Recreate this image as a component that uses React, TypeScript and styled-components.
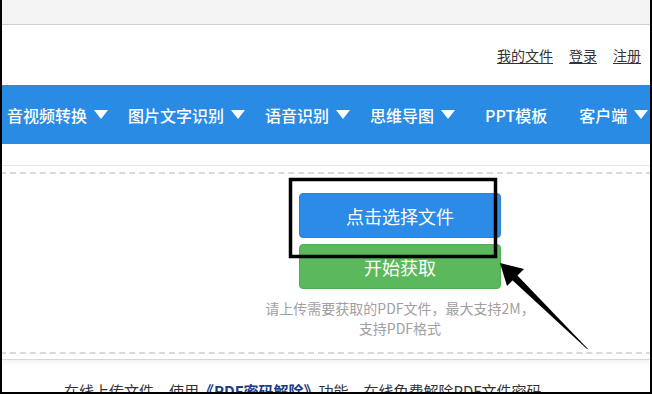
import React from "react";
import styled, { createGlobalStyle } from "styled-components";

const GlobalStyle = createGlobalStyle`
  html, body {
    margin: 0;
    padding: 0;
    background: #fff;
  }
  body {
    font-family: "Noto Sans CJK SC", "Noto Sans", sans-serif;
  }
`;

const Page = styled.div`
  position: relative;
  width: 652px;
  height: 394px;
  box-sizing: border-box;
  border: 2px solid #000;
  border-top: none;
  overflow: hidden;
  display: flex;
  flex-direction: column;
  background: #fff;
`;

const TopBar = styled.div`
  height: 24px;
  flex: none;
  background: #f4f4f4;
  border-bottom: 1px solid #cfcfcf;
`;

const Header = styled.div`
  height: 60px;
  flex: none;
  display: flex;
  align-items: center;
  justify-content: flex-end;
  gap: 16px;
  padding: 0 9px 0 0;
  box-sizing: border-box;
`;

const HeaderLink = styled.a`
  font-size: 14px;
  color: #333;
  text-decoration: underline;
  text-underline-offset: 2px;
  cursor: pointer;
`;

const Nav = styled.nav`
  height: 59px;
  flex: none;
  background: #2a8be4;
  display: flex;
  align-items: center;
  gap: 20px;
  padding-left: 5px;
  white-space: nowrap;
`;

const NavItem = styled.div<{ $plain?: boolean }>`
  display: flex;
  align-items: center;
  gap: 7px;
  color: #fff;
  font-size: 16px;
  font-weight: 500;
  flex: none;
  margin: ${(p) => (p.$plain ? "0 12px 0 10px" : "0")};
`;

const Caret = styled.span`
  width: 0;
  height: 0;
  border-left: 7.5px solid transparent;
  border-right: 7.5px solid transparent;
  border-top: 9px solid #fff;
`;

const Gap = styled.div`
  height: 21px;
  flex: none;
`;

const Card = styled.section`
  flex: none;
  border-top: 1px solid #e6e6e6;
  border-bottom: 1px solid #d6d6d6;
  box-shadow: 0 3px 4px rgba(0, 0, 0, 0.05);
  padding: 6px 0 5px;
`;

const DropZone = styled.div`
  border-top: 2px dashed #d9d9d9;
  border-bottom: 2px dashed #d9d9d9;
  margin: 0 -2px;
  height: 182px;
  box-sizing: border-box;
  display: flex;
  flex-direction: column;
  align-items: center;
  padding: 19px 0 0 148px;
`;

const ActionButton = styled.button<{ $tone: "blue" | "green" }>`
  width: 202px;
  height: 45px;
  border-radius: 4px;
  background: ${(p) => (p.$tone === "blue" ? "#2b8be6" : "#5cb85c")};
  border: 1px solid ${(p) => (p.$tone === "blue" ? "#2a82d6" : "#52ad52")};
  color: #fff;
  font-family: inherit;
  font-size: 18px;
  & + & {
    margin-top: 6px;
  }
`;

const Hint = styled.p`
  margin: 9px 0 0;
  width: 300px;
  text-align: center;
  font-size: 14px;
  line-height: 20px;
  color: #a0a0a0;
`;

const Footer = styled.div`
  flex: none;
  padding: 20px 0 0 62px;
  font-size: 15px;
  color: #333;
  white-space: nowrap;
`;

const FooterLink = styled.span`
  color: #1a3a8a;
  font-weight: 700;
`;

const Overlay = styled.svg`
  position: absolute;
  left: -2px;
  top: 0;
  pointer-events: none;
`;

const navItems: { label: string; caret: boolean }[] = [
  { label: "音视频转换", caret: true },
  { label: "图片文字识别", caret: true },
  { label: "语音识别", caret: true },
  { label: "思维导图", caret: true },
  { label: "PPT模板", caret: false },
  { label: "客户端", caret: true },
];

export default function App() {
  return (
    <>
      <GlobalStyle />
      <Page>
        <TopBar />
        <Header>
          <HeaderLink>我的文件</HeaderLink>
          <HeaderLink>登录</HeaderLink>
          <HeaderLink>注册</HeaderLink>
        </Header>
        <Nav>
          {navItems.map((item) => (
            <NavItem key={item.label} $plain={!item.caret}>
              {item.label}
              {item.caret && <Caret />}
            </NavItem>
          ))}
        </Nav>
        <Gap />
        <Card>
          <DropZone>
            <ActionButton $tone="blue">点击选择文件</ActionButton>
            <ActionButton $tone="green">开始获取</ActionButton>
            <Hint>
              请上传需要获取的PDF文件，最大支持2M，
              <br />
              支持PDF格式
            </Hint>
          </DropZone>
        </Card>
        <Footer>
          在线上传文件，使用<FooterLink>《PDF密码解除》</FooterLink>功能，在线免费解除PDF文件密码
        </Footer>
        {/* annotation: highlight box + tapered arrow */}
        <Overlay width="652" height="394" viewBox="0 0 652 394">
          <rect x="290.5" y="179.5" width="205" height="77" fill="none" stroke="#000" strokeWidth="3.5" />
          <polygon points="588,349 587,349 510,278 515,273" fill="#000" />
          <polygon points="500,263 524,269 507,286" fill="#000" />
        </Overlay>
      </Page>
    </>
  );
}
